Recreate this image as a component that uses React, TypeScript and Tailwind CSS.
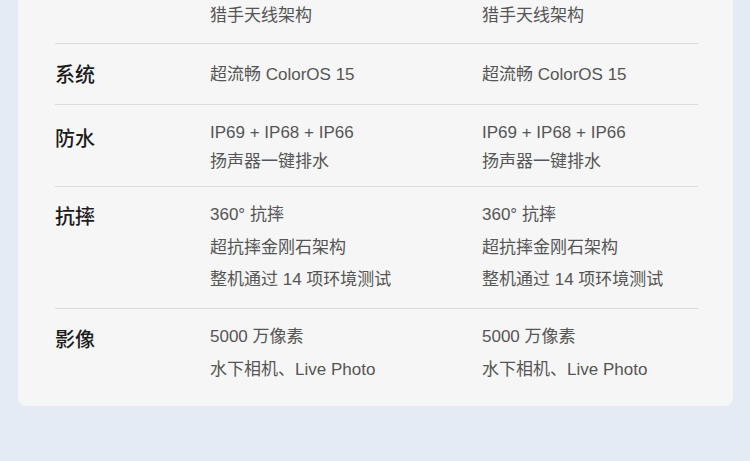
type Row = {
  label: string;
  values: string[];
  row: string;
  labelPad: string;
  valuePad: string;
  leading: string;
};

const rows: Row[] = [
  {
    label: "",
    values: ["猎手天线架构"],
    row: "h-[43px]",
    labelPad: "pt-0",
    valuePad: "pt-0",
    leading: "leading-[32px]",
  },
  {
    label: "系统",
    values: ["超流畅 ColorOS 15"],
    row: "h-[61px] border-t",
    labelPad: "pt-[15px]",
    valuePad: "pt-[15px]",
    leading: "leading-[32px]",
  },
  {
    label: "防水",
    values: ["IP69 + IP68 + IP66", "扬声器一键排水"],
    row: "h-[82px] border-t",
    labelPad: "pt-[18px]",
    valuePad: "pt-[13px]",
    leading: "leading-[29px]",
  },
  {
    label: "抗摔",
    values: ["360° 抗摔", "超抗摔金刚石架构", "整机通过 14 项环境测试"],
    row: "h-[122px] border-t",
    labelPad: "pt-[14px]",
    valuePad: "pt-[12px]",
    leading: "leading-[32.5px]",
  },
  {
    label: "影像",
    values: ["5000 万像素", "水下相机、Live Photo"],
    row: "h-[98px] border-t",
    labelPad: "pt-[15px]",
    valuePad: "pt-[11px]",
    leading: "leading-[33px]",
  },
];

const cjk = { fontFamily: '"Liberation Sans", "Noto Sans CJK SC", sans-serif' };

export default function App() {
  return (
    <div className="h-[461px] w-[750px] overflow-hidden bg-[#e4ebf5]">
      <div className="ml-[18px] w-[715px] rounded-b-[8px] bg-[#f6f6f6] pl-[37px] pr-[35px]" style={cjk}>
        {rows.map((r, i) => (
          <div key={i} className={`flex border-[#dddddd] ${r.row}`}>
            <div className={`w-[155px] shrink-0 text-[20px] font-medium leading-[32px] text-[#1c1c1c] ${r.labelPad}`}>
              {r.label}
            </div>
            {[0, 1].map((c) => (
              <div key={c} className={`w-[272px] shrink-0 text-[17px] text-[#555555] ${r.valuePad} ${r.leading}`}>
                {r.values.map((v) => (
                  <div key={v}>{v}</div>
                ))}
              </div>
            ))}
          </div>
        ))}
      </div>
    </div>
  );
}
